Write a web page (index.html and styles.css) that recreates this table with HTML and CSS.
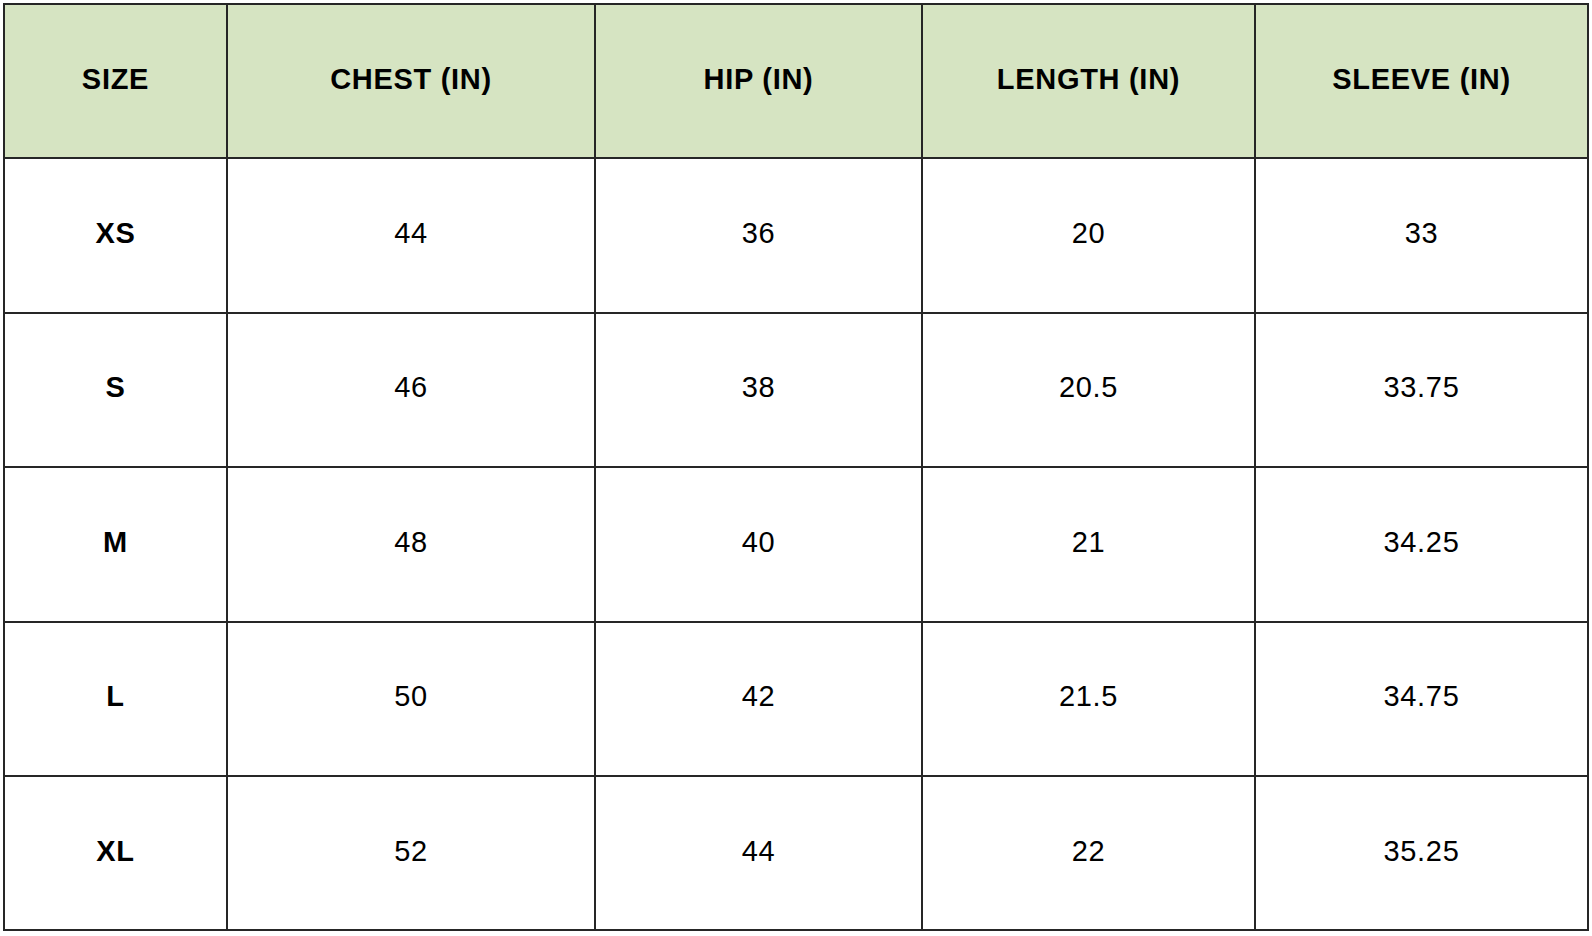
FILE: index.html
```html
<!DOCTYPE html>
<html>
<head>
<meta charset="utf-8">
<link rel="stylesheet" href="styles.css">
</head>
<body>
<table class="size-chart">
  <colgroup>
    <col class="c1"><col class="c2"><col class="c3"><col class="c4"><col class="c5">
  </colgroup>
  <thead>
    <tr><th>SIZE</th><th>CHEST (IN)</th><th>HIP (IN)</th><th>LENGTH (IN)</th><th>SLEEVE (IN)</th></tr>
  </thead>
  <tbody>
    <tr><th>XS</th><td>44</td><td>36</td><td>20</td><td>33</td></tr>
    <tr><th>S</th><td>46</td><td>38</td><td>20.5</td><td>33.75</td></tr>
    <tr><th>M</th><td>48</td><td>40</td><td>21</td><td>34.25</td></tr>
    <tr><th>L</th><td>50</td><td>42</td><td>21.5</td><td>34.75</td></tr>
    <tr><th>XL</th><td>52</td><td>44</td><td>22</td><td>35.25</td></tr>
  </tbody>
</table>
</body>
</html>
```
FILE: styles.css
```css
html, body {
  margin: 0;
  padding: 0;
  background: #ffffff;
}
body {
  padding: 3px 0 0 3px;
  font-family: "Liberation Sans", Arial, Helvetica, sans-serif;
  color: #000;
}
.size-chart {
  border-collapse: collapse;
  table-layout: fixed;
  width: 1584px;
}
.c1 { width: 223px; }
.c2 { width: 368px; }
.c3 { width: 327px; }
.c4 { width: 333px; }
.c5 { width: 333px; }
.size-chart th,
.size-chart td {
  border: 2px solid #262626;
  height: 154.4px;
  box-sizing: border-box;
  text-align: center;
  vertical-align: middle;
  padding: 0 0 4px 0;
  font-size: 29px;
  letter-spacing: 0.7px;
}
.size-chart th {
  font-weight: bold;
}
.size-chart td {
  font-weight: normal;
}
.size-chart thead th {
  background: #d6e4c2;
}
```
